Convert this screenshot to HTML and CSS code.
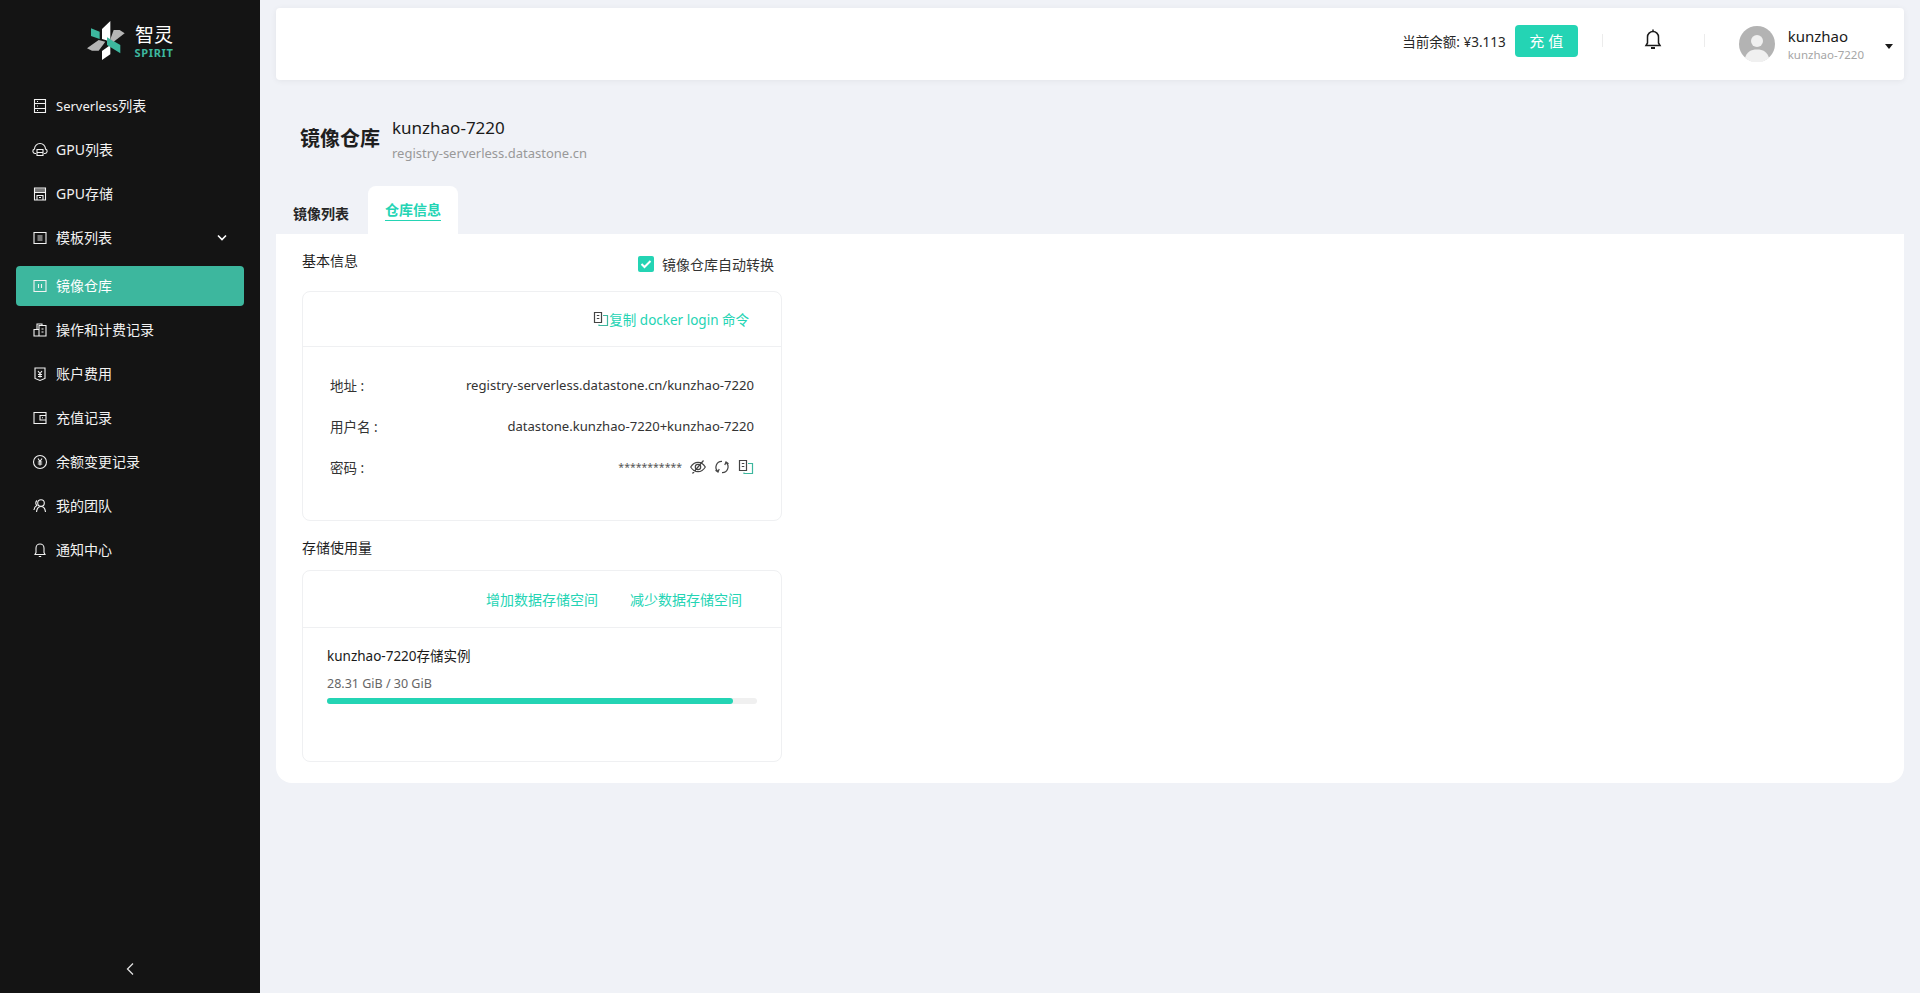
FILE: index.html
```html
<!DOCTYPE html>
<html lang="zh-CN">

<head>
    <meta charset="UTF-8">
    <meta name="viewport" content="width=device-width, initial-scale=1.0">
    <title>镜像仓库</title>
    <link rel="stylesheet" href="styles.css">
</head>

<body>
    <!-- 左侧菜单 -->
    <aside class="sidebar">
        <div class="logo">
            <svg class="logo-mark" viewBox="0 0 114 117">
                <path fill="#fff" d="M45 24L70 0V68L58 58 45 54z"/>
                <path fill="#fff" d="M45 90L70 72V100L45 117z"/>
                <path fill="#3db79e" d="M12 22L38 32V54L12 45z"/>
                <path fill="#3db79e" d="M60 49L100 72V97L60 72z"/>
                <path fill="#b5b5b5" d="M80 27L98 27 113 37 80 62 70 55z"/>
                <path fill="#b5b5b5" d="M0 82L35 57 55 62 35 89 15 89z"/>
            </svg>
            <div class="logo-text">
                <span class="logo-cn">智灵</span>
                <span class="logo-en">SPIRIT</span>
            </div>
        </div>

        <nav class="menu">
            <a class="menu-item">
                <svg class="menu-icon" viewBox="0 0 16 16"><path d="M2.500 1.500h11v13h-11zM2.500 5.500h11M2.500 10.500h11M5 3.500h1M5 8h1M5 12.500h1"/></svg>
                <span class="latin">Serverless</span>列表
            </a>
            <a class="menu-item">
                <svg class="menu-icon" viewBox="0 0 16 16"><path d="M4 11.500H3A2.300 2.300 0 0 1 2.500 7 5.500 5.500 0 0 1 13.500 7a2.300 2.300 0 0 1-.500 4.500h-1M5 7.500h6v6H5zM5 10.500h6"/></svg>
                GPU列表
            </a>
            <a class="menu-item">
                <svg class="menu-icon" viewBox="0 0 16 16"><path class="solid" d="M3 2.500h10v3.500H3z"/><path d="M2.500 2h11v12h-11zM2.500 6.500h11M5 14v-4.500h6V14M7 11.500h2"/></svg>
                GPU存储
            </a>
            <a class="menu-item">
                <svg class="menu-icon" viewBox="0 0 16 16"><path class="solid" d="M5.500 5h5v6h-5z"/><path d="M2 2.500h12v11H2z"/></svg>
                模板列表
                <svg class="menu-arrow" width="12" height="8" viewBox="0 0 12 8"><path d="M2 1.500l4 4 4-4"/></svg>
            </a>
            <a class="menu-item active">
                <svg class="menu-icon" viewBox="0 0 16 16"><path d="M2 2.500h12v11H2zM6.500 6v4M9.500 6v4"/></svg>
                镜像仓库
            </a>
            <a class="menu-item">
                <svg class="menu-icon" viewBox="0 0 16 16"><path d="M2 7.500h5v6.500H2zM7 3.500h7V14H7zM5 7.500V2h5v1.500M9.500 7h2M9.500 10h2"/></svg>
                操作和计费记录
            </a>
            <a class="menu-item">
                <svg class="menu-icon" viewBox="0 0 16 16"><path d="M3 2h10v10.500L8 14.500l-5-2zM6 5l2 2.500L10 5M6 8.500h4M6 10.500h4M8 7.500v4"/></svg>
                账户费用
            </a>
            <a class="menu-item">
                <svg class="menu-icon" viewBox="0 0 16 16"><path d="M2 2.500h12v11H2zM14 5.500H8v4.500h6M10 7.700h1"/></svg>
                充值记录
            </a>
            <a class="menu-item">
                <svg class="menu-icon" viewBox="0 0 16 16"><circle cx="8" cy="8" r="6.500"/><path d="M6 4.500l2 3 2-3M5.800 8h4.400M5.800 10h4.400M8 7.500v4"/></svg>
                余额变更记录
            </a>
            <a class="menu-item">
                <svg class="menu-icon" viewBox="0 0 16 16"><circle cx="9" cy="5" r="3.300"/><path d="M4.500 14c.300-3 2-5.500 4.500-5.500s4.200 2.500 4.500 5.500M5 2.500A3.300 3.300 0 0 0 4.800 7.500C3 8.500 2.200 10 2 12"/></svg>
                我的团队
            </a>
            <a class="menu-item">
                <svg class="menu-icon" viewBox="0 0 16 16"><path d="M3 12.500h10l-1-2V6a4 4 0 0 0-8 0v4.500zM6.800 14.500h2.400"/></svg>
                通知中心
            </a>
        </nav>

        <svg class="collapse" width="10" height="14" viewBox="0 0 10 14"><path d="M8 1.500L2.500 7 8 12.500"/></svg>
    </aside>

    <main class="main">
        <!-- 顶部栏 -->
        <header class="topbar">
            <span class="balance">当前余额: ¥3.113</span>
            <button class="recharge-btn">充 值</button>
            <span class="divider divider-first"></span>
            <svg class="bell" width="20" height="22" viewBox="0 0 20 22"><path d="M3 17.500h14l-1.500-2.500V9a5.500 5.500 0 0 0-11 0v6zM10 1.500v2"/><path d="M8 20h4" stroke-width="2"/></svg>
            <span class="divider"></span>
            <svg class="avatar" width="36" height="36" viewBox="0 0 36 36">
                <circle cx="18" cy="18" r="18" fill="#b3b3b3"/>
                <circle cx="18" cy="15" r="6" fill="#f0f0f0"/>
                <path fill="#f0f0f0" d="M6 32c1.500-6 6-8.500 12-8.500S28.500 26 30 32a18 18 0 0 1-24 0z"/>
            </svg>
            <div class="user">
                <span class="user-name">kunzhao</span>
                <span class="user-team">kunzhao-7220</span>
            </div>
            <span class="caret"></span>
        </header>

        <div class="page-head">
            <h1 class="page-title">镜像仓库</h1>
            <div class="repo">
                <div class="repo-name">kunzhao-7220</div>
                <div class="repo-host">registry-serverless.datastone.cn</div>
            </div>
        </div>

        <div class="tabs">
            <div class="tab">镜像列表</div>
            <div class="tab tab-active"><span>仓库信息</span></div>
        </div>

        <section class="panel">
            <div class="section-head">
                <span class="section-title">基本信息</span>
                <label class="auto-convert">
                    <span class="checkbox">
                        <svg width="12" height="10" viewBox="0 0 12 10"><path d="M1.500 5l3 3 6-6"/></svg>
                    </span>
                    镜像仓库自动转换
                </label>
            </div>

            <div class="card card-info">
                <div class="card-head">
                    <a class="link copy-link">
                        <svg class="copy-icon" width="16" height="16" viewBox="0 0 16 16">
                            <path stroke="#444" d="M1.500 1.500h7v10h-7zM3.800 4.500h2.500M3.800 7.500h2.500"/>
                            <path stroke="#3db79e" d="M10 4.500h4.500v10H6v-1"/>
                        </svg>复制 docker login 命令</a>
                </div>
                <div class="info-rows">
                    <div class="info-row">
                        <span>地址 :</span>
                        <span class="info-value">registry-serverless.datastone.cn/kunzhao-7220</span>
                    </div>
                    <div class="info-row">
                        <span>用户名 :</span>
                        <span class="info-value">datastone.kunzhao-7220+kunzhao-7220</span>
                    </div>
                    <div class="info-row">
                        <span>密码 :</span>
                        <span class="password">
                            ***********
                            <svg class="tool" viewBox="0 0 16 16"><path d="M.700 8C2.500 5 5 3.300 8 3.300S13.500 5 15.300 8c-1.800 3-4.300 4.700-7.300 4.700S2.500 11 .700 8zM13.500 1.500L2.500 14.500"/><circle cx="8" cy="8" r="2.700"/></svg>
                            <svg class="tool" viewBox="0 0 16 16"><path d="M8 2.300A5.800 5.800 0 0 0 4 12.500M1.500 11.200L4 13l1.200-2.900M8 13.700A5.800 5.800 0 0 0 12 3.500M14.500 4.800L12 3l-1.200 2.900"/></svg>
                            <svg class="tool" viewBox="0 0 16 16"><path d="M1.500 1.500h7v10h-7zM3.800 4.500h2.500M3.800 7.500h2.500"/><path stroke="#3db79e" d="M10 4.500h4.500v10H6v-1"/></svg>
                        </span>
                    </div>
                </div>
            </div>

            <div class="section-title storage-title">存储使用量</div>

            <div class="card card-storage">
                <div class="card-head storage-links">
                    <a class="link">增加数据存储空间</a>
                    <a class="link">减少数据存储空间</a>
                </div>
                <div class="storage-body">
                    <div class="storage-name">kunzhao-7220存储实例</div>
                    <div class="storage-usage">28.31 GiB / 30 GiB</div>
                    <div class="progress">
                        <div class="progress-fill" style="width: 94.4%"></div>
                    </div>
                </div>
            </div>
        </section>
    </main>
</body>

</html>
```

FILE: styles.css
```css
* {
    box-sizing: border-box;
}

body {
    margin: 0;
    height: 993px;
    display: flex;
    overflow: hidden;
    background-color: #f0f2f7;
    color: #1f1f1f;
    font-family: "Noto Sans", "Noto Sans CJK SC", sans-serif;
    font-size: 14px;
}

/* 左侧菜单 */
.sidebar {
    position: relative;
    flex: 0 0 260px;
    background-color: #141414;
    color: #fff;
}

.logo {
    display: flex;
    justify-content: center;
    align-items: center;
    gap: 9px;
    height: 80px;
    padding: 0 0 0 1px;
}

.logo-mark {
    width: 38px;
    height: 39px;
}

.logo-text {
    display: flex;
    flex-direction: column;
    align-items: center;
}

.logo-cn {
    font-size: 19px;
    line-height: 24px;
}

.logo-en {
    color: #3db79e;
    font-size: 11px;
    font-weight: 700;
    line-height: 11px;
    letter-spacing: 0.700px;
}

.menu {
    display: flex;
    flex-direction: column;
    gap: 4px;
    padding: 6px 16px 0;
}

.menu-item {
    display: flex;
    align-items: center;
    height: 40px;
    padding-left: 16px;
    padding-bottom: 1px;
    border-radius: 4px;
    color: #f2f2f2;
    font-size: 14px;
    line-height: 20px;
}

.latin {
    font-size: 13px;
}

.menu-item.active {
    margin-top: 4px;
    background-color: #3db79e;
    color: #fff;
}

.menu-icon {
    flex: none;
    width: 16px;
    height: 16px;
    margin-right: 8px;
    fill: none;
    stroke: #f2f2f2;
    stroke-width: 1.100;
}

.menu-icon .solid {
    fill: #777;
    stroke: none;
}

.menu-arrow {
    margin-left: auto;
    margin-right: 16px;
    fill: none;
    stroke: #fff;
    stroke-width: 1.600;
}

.collapse {
    position: absolute;
    left: 125px;
    bottom: 17px;
    fill: none;
    stroke: #e0e0e0;
    stroke-width: 1.300;
}

/* 右侧内容 */
.main {
    flex: 1;
    min-width: 0;
    padding: 8px 16px 0;
}

.topbar {
    display: flex;
    align-items: center;
    height: 72px;
    padding-right: 11px;
    background-color: #fff;
    border-radius: 4px;
    box-shadow: 0 1px 6px rgba(0, 0, 0, 0.06);
}

.balance {
    margin-left: auto;
    margin-bottom: 7px;
    font-size: 13.500px;
    color: #262626;
}

.recharge-btn {
    width: 63px;
    height: 32px;
    margin-left: 9px;
    margin-bottom: 7px;
    padding: 0;
    border: none;
    border-radius: 4px;
    background-color: #24d4b4;
    color: #fff;
    font-family: inherit;
    font-size: 15px;
}

.divider {
    width: 1px;
    height: 13px;
    margin-bottom: 7px;
    background-color: #ececec;
}

.divider-first {
    margin-left: 24px;
}

.bell {
    margin: 0 41px 10px 40px;
    fill: none;
    stroke: #1a1a1a;
    stroke-width: 1.500;
}

.avatar {
    margin-left: 34px;
}

.user {
    display: flex;
    flex-direction: column;
    margin-left: 13px;
}

.user-name {
    font-size: 15px;
    line-height: 20px;
    color: #1a1a1a;
}

.user-team {
    margin-top: 1px;
    font-size: 11.500px;
    line-height: 16px;
    color: #a6a6a6;
}

.caret {
    width: 0;
    height: 0;
    margin: 4px 0 0 21px;
    border-left: 4px solid transparent;
    border-right: 4px solid transparent;
    border-top: 5px solid #1a1a1a;
}

.page-head {
    display: flex;
    align-items: center;
    height: 106px;
    padding: 8px 0 0 24px;
}

.page-title {
    margin: 0 12px 0 0;
    font-size: 20px;
    font-weight: 700;
    color: #1f1f1f;
}

.repo {
    margin-top: 4px;
}

.repo-name {
    font-size: 17px;
    line-height: 24px;
    color: #1a1a1a;
}

.repo-host {
    margin-top: 3px;
    font-size: 13px;
    line-height: 20px;
    color: #999;
}

.tabs {
    display: flex;
    height: 48px;
    gap: 19px;
    padding-left: 17px;
}

.tab {
    padding-top: 17px;
    font-size: 14px;
    font-weight: 700;
    color: #262626;
}

.tab-active {
    padding: 14px 17px 0;
    background-color: #fff;
    border-radius: 8px 8px 0 0;
    color: #24d4b4;
}

.tab-active span {
    display: block;
    line-height: 20px;
    border-bottom: 1px solid #24d4b4;
}

.panel {
    height: 549px;
    padding: 16px 0 0 26px;
    background-color: #fff;
    border-radius: 0 0 16px 16px;
}

.section-head {
    display: flex;
    justify-content: space-between;
    width: 480px;
    height: 41px;
    padding-right: 8px;
}

.section-title {
    font-size: 14px;
    line-height: 22px;
    color: #1f1f1f;
}

.auto-convert {
    display: flex;
    align-items: center;
    height: 22px;
    margin-top: 3px;
    font-size: 14px;
    color: #333;
}

.checkbox {
    display: flex;
    justify-content: center;
    align-items: center;
    width: 16px;
    height: 16px;
    margin-right: 8px;
    border-radius: 2px;
    background-color: #24d4b4;
}

.checkbox svg {
    fill: none;
    stroke: #fff;
    stroke-width: 2;
}

.card {
    width: 480px;
    background-color: #fff;
    border: 1px solid #eff0f2;
    border-radius: 8px;
}

.card-info {
    height: 230px;
}

.card-storage {
    height: 192px;
}

.card-head {
    display: flex;
    align-items: center;
    justify-content: flex-end;
    height: 55px;
    padding-right: 32px;
    border-bottom: 1px solid #eff0f2;
}

.link {
    color: #24d4b4;
    font-size: 14px;
}

.copy-link {
    display: flex;
    align-items: center;
    font-size: 13.500px;
}

.copy-icon {
    fill: none;
    stroke-width: 1.200;
}

.info-rows {
    padding: 17px 27px 0;
}

.info-row {
    display: flex;
    justify-content: space-between;
    align-items: center;
    height: 41px;
    font-size: 13.500px;
    color: #333;
}

.info-value {
    font-size: 13.100px;
}

.password {
    display: flex;
    align-items: center;
    gap: 8px;
    font-size: 10.500px;
    color: #555;
}

.tool {
    width: 16px;
    height: 16px;
    fill: none;
    stroke: #444;
    stroke-width: 1.200;
}

.storage-title {
    margin: 16px 0 11px;
}

.storage-links {
    gap: 32px;
    height: 57px;
    padding-right: 39px;
}

.storage-body {
    padding: 17px 24px 0;
}

.storage-name {
    font-size: 13.500px;
    line-height: 22px;
    color: #1a1a1a;
}

.storage-usage {
    margin-top: 8px;
    font-size: 12.500px;
    line-height: 18px;
    color: #666;
}

.progress {
    width: 430px;
    height: 6px;
    margin-top: 5px;
    border-radius: 3px;
    background-color: #f0f0f0;
}

.progress-fill {
    height: 100%;
    border-radius: 3px;
    background-color: #24d4b4;
}
```
